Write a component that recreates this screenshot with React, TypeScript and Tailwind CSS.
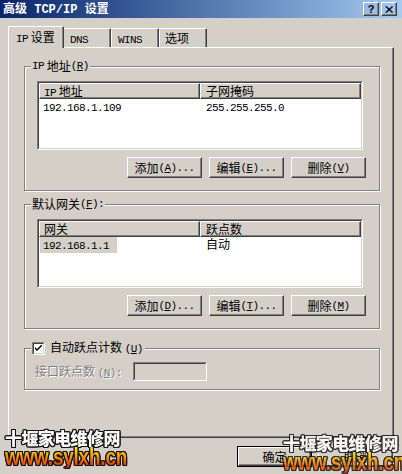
import React from 'react';

const raised =
  'border border-t-white border-l-white border-r-[#404040] border-b-[#404040] shadow-[inset_-1px_-1px_0_#808080]';
const sunkenOuter = 'border border-t-[#808080] border-l-[#808080] border-r-white border-b-white';
const sunkenInner = 'border border-t-[#404040] border-l-[#404040] border-r-[#d4d0c8] border-b-[#d4d0c8]';
const etched = 'border border-[#808080] shadow-[inset_1px_1px_0_#fff,1px_1px_0_#fff]';

function M({ children }: { children: React.ReactNode }) {
  return <span className="font-['Liberation_Mono'] text-[11px] tracking-[-0.6px]">{children}</span>;
}

function Key({ k }: { k: string }) {
  return (
    <M>
      (<u>{k}</u>)
    </M>
  );
}

function Btn({ children, def }: { children: React.ReactNode; def?: boolean }) {
  return (
    <div className={`w-[75px] h-[21px] ${def ? 'border border-black' : ''}`}>
      <div className={`${raised} w-full h-full flex items-center justify-center leading-[14px]`}>{children}</div>
    </div>
  );
}

function ListView({
  cols,
  row,
  selected,
}: {
  cols: [React.ReactNode, React.ReactNode];
  row: [React.ReactNode, React.ReactNode];
  selected?: boolean;
}) {
  return (
    <div className={`${sunkenOuter} ml-[12px] w-[326px] h-[69px]`}>
      <div className={`${sunkenInner} h-full bg-white`}>
        <div className="flex h-[16px] bg-[#d4d0c8] leading-[14px]">
          <div className={`${raised} w-[161px] pl-[4px]`}>{cols[0]}</div>
          <div className={`${raised} flex-1 pl-[5px]`}>{cols[1]}</div>
        </div>
        <div className="flex h-[14px] leading-[14px]">
          <div className="w-[161px]">
            {selected ? (
              <span className="inline-block ml-[1px] w-[77px] pl-[3px] bg-[#d4d0c8]">{row[0]}</span>
            ) : (
              <span className="pl-[4px]">{row[0]}</span>
            )}
          </div>
          <div className="flex-1 pl-[6px]">{row[1]}</div>
        </div>
      </div>
    </div>
  );
}

function GroupLabel({ children }: { children: React.ReactNode }) {
  return (
    <div className="-mt-[8px] ml-[6px] w-fit px-[1px] h-[14px] leading-[14px] bg-[#d4d0c8] flex items-center">
      {children}
    </div>
  );
}

function Buttons({ items }: { items: React.ReactNode[] }) {
  return (
    <div className="flex justify-end gap-[7px] mt-[7px] mr-[13px]">
      {items.map((b, i) => (
        <Btn key={i}>{b}</Btn>
      ))}
    </div>
  );
}

const outline =
  '[filter:drop-shadow(1px_0_0_#111)_drop-shadow(-1px_0_0_#111)_drop-shadow(0_1px_0_#111)_drop-shadow(0_-1px_0_#111)]';

function Watermark({ className }: { className: string }) {
  return (
    <div className={`absolute w-[118px] ${className} ${outline}`}>
      <div className="font-['Noto_Sans_CJK_SC'] font-black text-[17px] leading-[19px] text-white tracking-[-0.6px]">
        十堰家电维修网
      </div>
      <div className="w-fit origin-left scale-x-[0.82] font-['Liberation_Sans_Narrow','Liberation_Sans',sans-serif] font-bold text-[23px] leading-[21px] tracking-[-0.2px] bg-gradient-to-b from-[#fff200] via-[#ff8a00] to-[#d40000] bg-clip-text text-transparent">
        www.sylxh.cn
      </div>
    </div>
  );
}

export default function App() {
  return (
    <div className="relative w-[402px] h-[474px] overflow-hidden bg-[#d4d0c8] text-black text-[12px] font-['Noto_Sans_CJK_SC',sans-serif]">
      {/* title bar */}
      <div className="h-[18px] flex items-center justify-between pl-[3px] pr-[5px] bg-gradient-to-r from-[#0a246a] to-[#a6caf0]">
        <div className="text-white font-bold leading-[14px] whitespace-pre">
          高级<span className="font-['Liberation_Mono'] text-[12px]"> TCP/IP </span>设置
        </div>
        <div className="flex gap-[2px]">
          <div className={`${raised} w-[16px] h-[14px] flex items-center justify-center font-bold font-['Liberation_Sans'] text-[11px] leading-none`}>
            ?
          </div>
          <div className={`${raised} w-[16px] h-[14px] flex items-center justify-center`}>
            <svg width="8" height="7" viewBox="0 0 8 7">
              <path d="M0.5 0.5 L7 6.5 M1.5 0.5 L8 6.5 M7 0.5 L0.5 6.5 M8 0.5 L1.5 6.5" stroke="#000" strokeWidth="1" />
            </svg>
          </div>
        </div>
      </div>

      {/* tabs */}
      <div className="flex items-end ml-[8px] mt-[8px] relative z-10">
        <div className="h-[22px] -mb-px w-[56px] bg-[#d4d0c8] border-t border-l border-r border-t-white border-l-white border-r-[#404040] shadow-[inset_-1px_0_0_#808080] pl-[7px] pt-[3px] leading-[14px]">
          <M>IP</M> 设置
        </div>
        <div className="h-[19px] w-[47px] border-t border-r border-t-white border-r-[#404040] shadow-[inset_-1px_0_0_#808080] pl-[6px] pt-[2px] leading-[14px]">
          <M>DNS</M>
        </div>
        <div className="h-[19px] w-[48px] border-t border-l border-r border-t-white border-l-white border-r-[#404040] shadow-[inset_-1px_0_0_#808080] pl-[6px] pt-[2px] leading-[14px]">
          <M>WINS</M>
        </div>
        <div className="h-[19px] w-[48px] border-t border-l border-r border-t-white border-l-white border-r-[#404040] shadow-[inset_-1px_0_0_#808080] pl-[5px] pt-[2px] leading-[14px]">
          选项
        </div>
      </div>

      {/* tab panel */}
      <div className={`${raised} ml-[8px] w-[386px] h-[391px] pt-[18px] pl-[15px]`}>
        <div className={`${etched} w-[356px] h-[125px]`}>
          <GroupLabel>
            <M>IP</M>&nbsp;地址<Key k="R" />
          </GroupLabel>
          <div className="mt-[8px]">
            <ListView
              cols={[
                <>
                  <M>IP</M> 地址
                </>,
                '子网掩码',
              ]}
              row={[<M>192.168.1.109</M>, <M>255.255.255.0</M>]}
            />
          </div>
          <Buttons
            items={[
              <>
                添加<Key k="A" />
                <M>...</M>
              </>,
              <>
                编辑 <Key k="E" />
                <M>...</M>
              </>,
              <>
                删除 <Key k="V" />
              </>,
            ]}
          />
        </div>

        <div className={`${etched} w-[356px] h-[125px] mt-[13px]`}>
          <GroupLabel>
            默认网关<Key k="F" />
            <M>:</M>
          </GroupLabel>
          <div className="mt-[8px]">
            <ListView
              cols={['网关', '跃点数']}
              row={[<M>192.168.1.1</M>, '自动']}
              selected
            />
          </div>
          <Buttons
            items={[
              <>
                添加<Key k="D" />
                <M>...</M>
              </>,
              <>
                编辑 <Key k="T" />
                <M>...</M>
              </>,
              <>
                删除 <Key k="M" />
              </>,
            ]}
          />
        </div>

        <div className={`${etched} w-[356px] h-[42px] mt-[19px]`}>
          <div className="-mt-[8px] ml-[6px] w-fit pl-[1px] pr-[2px] h-[14px] bg-[#d4d0c8] flex items-center gap-[5px] leading-[14px]">
            <div className={`${sunkenOuter} w-[13px] h-[13px]`}>
              <div className={`${sunkenInner} w-full h-full bg-white flex items-center justify-center`}>
                <svg width="7" height="7" viewBox="0 0 7 7">
                  <path d="M0 2 L0 4 L2 6 L7 1 L7 -1 L2 4 Z" fill="#000" />
                </svg>
              </div>
            </div>
            <span>
              自动跃点计数 <Key k="U" />
            </span>
          </div>
          <div className="flex items-center mt-[7px] ml-[10px]">
            <span className="w-[98px] text-[#808080] [text-shadow:1px_1px_0_#fff] leading-[14px]">
              接口跃点数 <Key k="N" />
              <M>:</M>
            </span>
            <div className={`${sunkenOuter} w-[74px] h-[19px]`}>
              <div className={`${sunkenInner} w-full h-full bg-[#d4d0c8]`} />
            </div>
          </div>
        </div>
      </div>

      {/* dialog buttons */}
      <div className="flex justify-end gap-[6px] mt-[8px] mr-[9px]">
        <Btn def>确定</Btn>
        <Btn>取消</Btn>
      </div>

      <Watermark className="left-[5px] top-[428px]" />
      <Watermark className="left-[283px] top-[433px] opacity-85" />
    </div>
  );
}
